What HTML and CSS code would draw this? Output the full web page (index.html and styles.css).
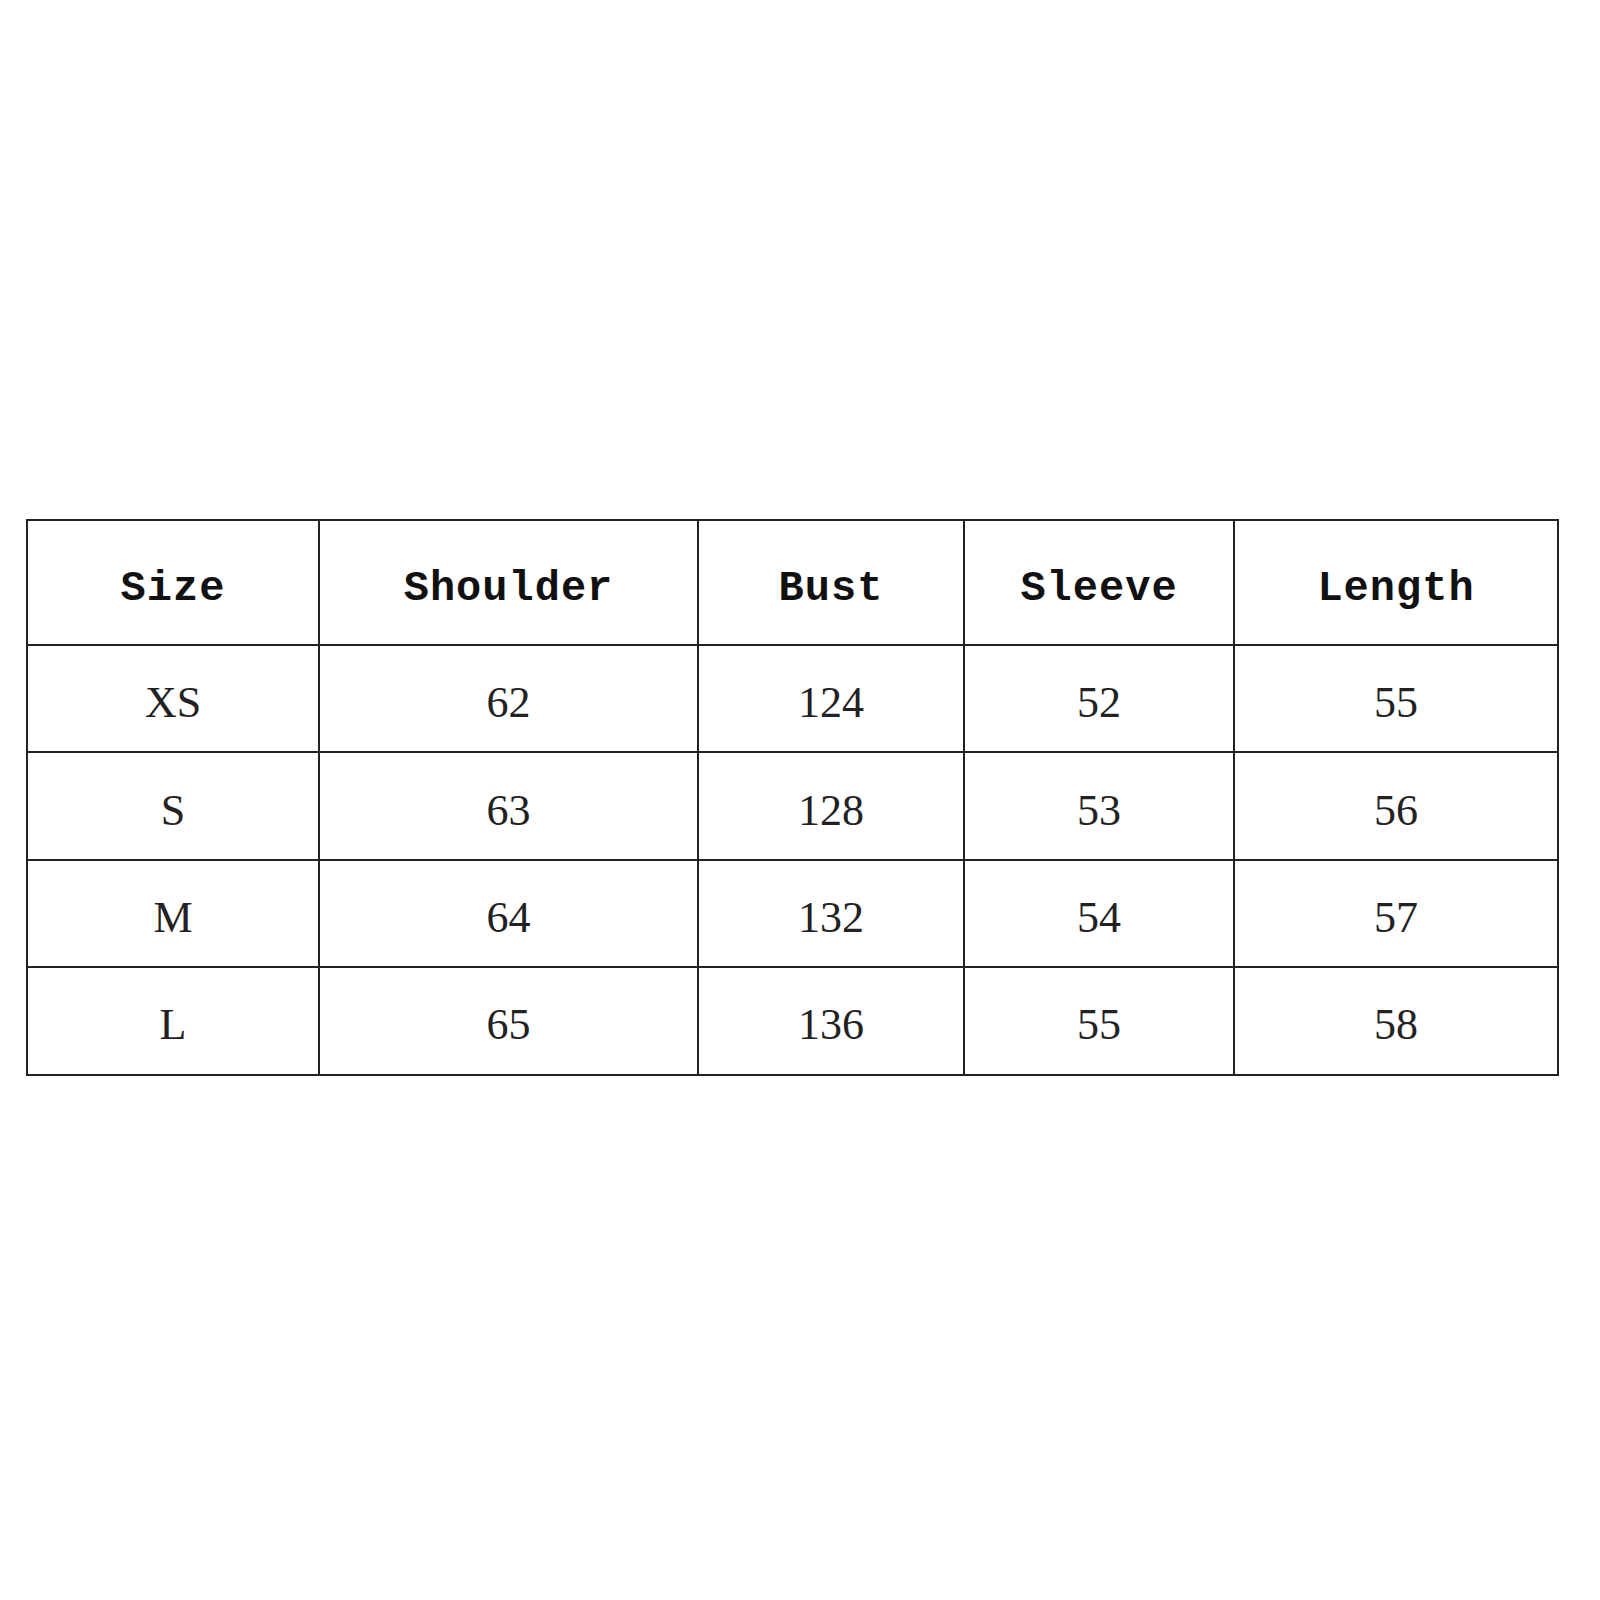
FILE: index.html
```html
<!DOCTYPE html>
<html>
<head>
<meta charset="utf-8">
<link rel="stylesheet" href="styles.css">
</head>
<body>
<div class="page">
  <table class="sizes">
    <colgroup>
      <col class="c1"><col class="c2"><col class="c3"><col class="c4"><col class="c5">
    </colgroup>
    <thead>
      <tr><th>Size</th><th>Shoulder</th><th>Bust</th><th>Sleeve</th><th>Length</th></tr>
    </thead>
    <tbody>
      <tr><td>XS</td><td>62</td><td>124</td><td>52</td><td>55</td></tr>
      <tr><td>S</td><td>63</td><td>128</td><td>53</td><td>56</td></tr>
      <tr><td>M</td><td>64</td><td>132</td><td>54</td><td>57</td></tr>
      <tr><td>L</td><td>65</td><td>136</td><td>55</td><td>58</td></tr>
    </tbody>
  </table>
</div>
</body>
</html>
```
FILE: styles.css
```css
html, body {
  margin: 0;
  padding: 0;
  background: #ffffff;
}
.page {
  width: 1600px;
  height: 1600px;
  padding-top: 519px;
  padding-left: 26px;
  box-sizing: border-box;
}
.sizes {
  border-collapse: collapse;
  table-layout: fixed;
  width: 1531px;
  color: #111;
}
.c1 { width: 292px; }
.c2 { width: 379px; }
.c3 { width: 266px; }
.c4 { width: 270px; }
.c5 { width: 324px; }
.sizes th, .sizes td {
  border: 2px solid #222;
  text-align: center;
  vertical-align: middle;
  padding: 0;
}
.sizes th {
  height: 111px;
  padding-top: 12px;
  font-family: "Liberation Mono", "DejaVu Sans Mono", monospace;
  font-weight: bold;
  font-size: 42px;
  letter-spacing: 1px;
}
.sizes td {
  height: 97.4px;
  padding-top: 8px;
  font-family: "Liberation Serif", "DejaVu Serif", serif;
  font-size: 44px;
  color: #222;
}
```
